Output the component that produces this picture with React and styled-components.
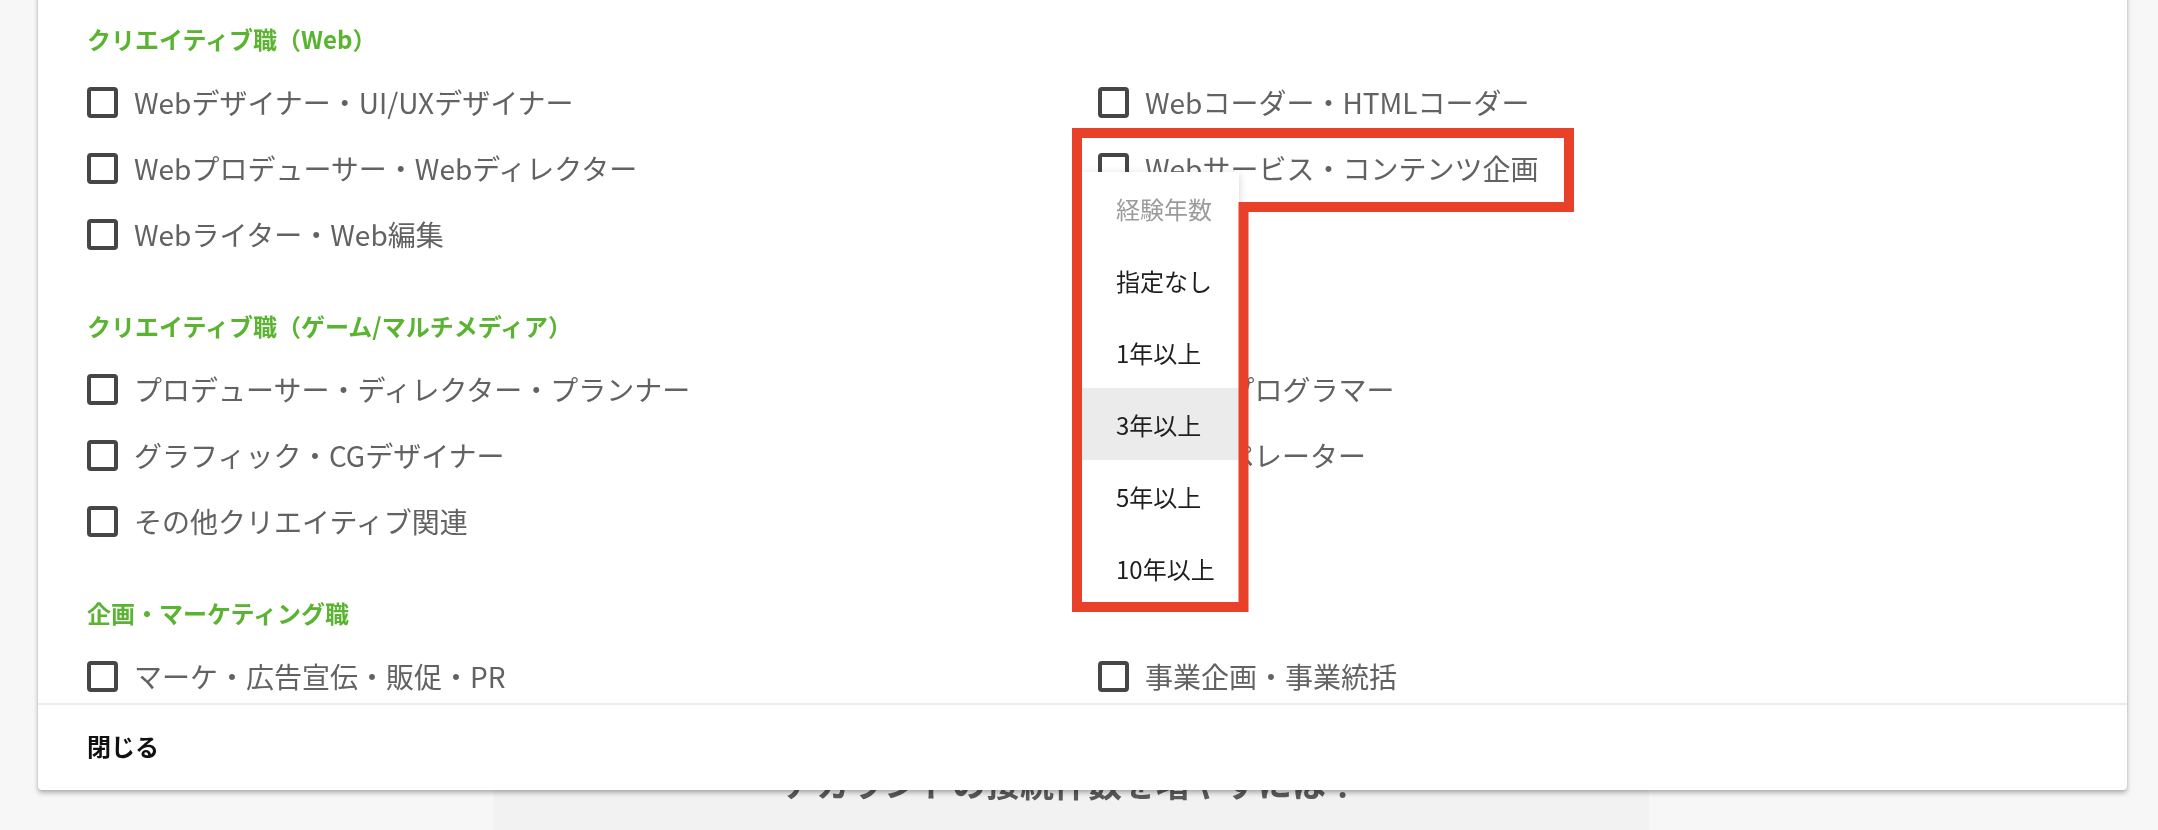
import React from 'react';
import styled, { createGlobalStyle } from 'styled-components';

const GlobalStyle = createGlobalStyle`
  html, body { margin: 0; padding: 0; }
  body {
    background: #f7f7f7;
    font-family: "Noto Sans CJK JP", "Noto Sans", sans-serif;
    overflow: hidden;
    width: 2158px;
    height: 830px;
  }
`;

const Page = styled.div`
  width: 2158px;
  height: 830px;
  display: flex;
  padding-left: 493px;
  box-sizing: border-box;
`;

const BackPanel = styled.section`
  width: 1156px;
  height: 830px;
  background: #f2f2f2;
  box-sizing: border-box;
  padding-top: 766px;
  display: flex;
  justify-content: center;
`;

const BackTitle = styled.h2`
  margin: 0;
  font-size: 34px;
  line-height: 1;
  font-weight: 700;
  color: #5a5a5a;
  filter: blur(0.6px);
`;

const Modal = styled.div`
  position: fixed;
  top: -10px;
  left: 38px;
  right: 31px;
  bottom: 40px;
  background: #fff;
  border-radius: 4px;
  box-shadow: 0 3px 5px rgba(0, 0, 0, 0.28), 0 0 3px rgba(0, 0, 0, 0.1);
  display: flex;
  flex-direction: column;
  z-index: 5;
`;

const Body = styled.div`
  flex: 1;
  overflow: hidden;
  padding: 33px 49px 0;
`;

const Section = styled.div`
  & + & {
    margin-top: 43px;
  }
`;

const Heading = styled.h3`
  margin: 0 0 14px;
  font-size: 24px;
  line-height: 32px;
  font-weight: 700;
  color: #5ab431;
`;

const Grid = styled.div`
  display: grid;
  grid-template-columns: 1fr 1fr;
  column-gap: 31px;
`;

const Option = styled.label`
  position: relative;
  display: flex;
  align-items: center;
  gap: 16px;
  height: 66px;
  font-size: 28px;
  color: #626262;
  white-space: nowrap;
`;

const Box = styled.span`
  flex: none;
  width: 31px;
  height: 31px;
  box-sizing: border-box;
  border: 4px solid #464646;
  border-radius: 4px;
`;

const Menu = styled.ul`
  position: absolute;
  left: -16px;
  top: 37px;
  width: 157px;
  margin: 0;
  padding: 0;
  list-style: none;
  background: #fff;
  box-shadow: 0 2px 8px rgba(0, 0, 0, 0.18);
  z-index: 3;
`;

const MenuItem = styled.li`
  height: 72px;
  display: flex;
  align-items: center;
  padding-left: 34px;
  font-size: 24px;
  color: ${(p) => (p.$header ? '#9b9b9b' : '#1f1f1f')};
  background: ${(p) => (p.$active ? '#ebebeb' : 'transparent')};
`;

const Footer = styled.div`
  flex: none;
  height: 87px;
  box-sizing: border-box;
  border-top: 2px solid #ebebeb;
  padding: 0 0 5px 49px;
  display: flex;
  align-items: center;
  font-size: 24px;
  font-weight: 700;
  color: #111;
`;

const Annotation = styled.svg`
  position: fixed;
  left: 0;
  top: 0;
  width: 2158px;
  height: 830px;
  pointer-events: none;
  z-index: 10;
`;

const sections = [
  {
    title: 'クリエイティブ職（Web）',
    items: [
      'Webデザイナー・UI/UXデザイナー',
      'Webコーダー・HTMLコーダー',
      'Webプロデューサー・Webディレクター',
      { label: 'Webサービス・コンテンツ企画', menu: true },
      'Webライター・Web編集',
    ],
  },
  {
    title: 'クリエイティブ職（ゲーム/マルチメディア）',
    items: [
      'プロデューサー・ディレクター・プランナー',
      'ゲームプログラマー',
      'グラフィック・CGデザイナー',
      'DTPオペレーター',
      'その他クリエイティブ関連',
    ],
  },
  {
    title: '企画・マーケティング職',
    items: ['マーケ・広告宣伝・販促・PR', '事業企画・事業統括'],
  },
];

const menuItems = ['指定なし', '1年以上', '3年以上', '5年以上', '10年以上'];

function ExperienceMenu() {
  return (
    <Menu>
      <MenuItem $header>経験年数</MenuItem>
      {menuItems.map((m) => (
        <MenuItem key={m} $active={m === '3年以上'}>
          {m}
        </MenuItem>
      ))}
    </Menu>
  );
}

export default function App() {
  return (
    <>
      <GlobalStyle />
      <Page>
        <BackPanel>
          <BackTitle>アカウントの接続件数を増やすには？</BackTitle>
        </BackPanel>
      </Page>
      <Modal>
        <Body>
          {sections.map((s) => (
            <Section key={s.title}>
              <Heading>{s.title}</Heading>
              <Grid>
                {s.items.map((it) => {
                  const label = typeof it === 'string' ? it : it.label;
                  return (
                    <Option key={label}>
                      <Box />
                      {label}
                      {typeof it !== 'string' && it.menu && <ExperienceMenu />}
                    </Option>
                  );
                })}
              </Grid>
            </Section>
          ))}
        </Body>
        <Footer>閉じる</Footer>
      </Modal>
      <Annotation viewBox="0 0 2158 830">
        <path
          d="M1077 133 H1569 V207 H1243.5 V607 H1077 Z"
          fill="none"
          stroke="#e94129"
          strokeWidth="10"
          strokeLinejoin="miter"
        />
      </Annotation>
    </>
  );
}
